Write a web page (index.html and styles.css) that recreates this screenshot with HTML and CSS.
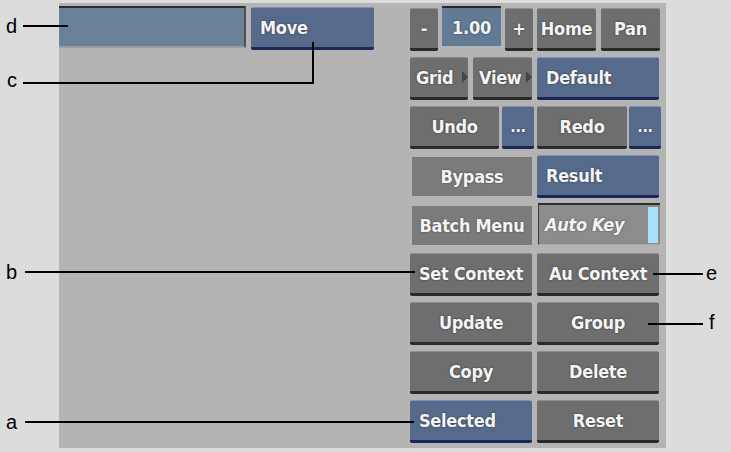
FILE: index.html
```html
<!DOCTYPE html>
<html>
<head>
<meta charset="utf-8">
<link rel="stylesheet" href="styles.css">
</head>
<body>
<div class="stage">
  <div class="panel">
    <div class="left">
      <div class="toprow">
        <div class="field-d"></div>
        <div class="btn blue w-move left-text">Move</div>
      </div>
    </div>
    <div class="right">
      <div class="row row-zoom">
        <div class="btn w-small">-</div>
        <div class="num">1.00</div>
        <div class="btn w-small">+</div>
        <div class="btn w-half">Home</div>
        <div class="btn w-pan">Pan</div>
      </div>
      <div class="row">
        <div class="btn w-grid arrow left-text">Grid</div>
        <div class="btn w-half arrow left-text">View</div>
        <div class="btn blue w-col left-text">Default</div>
      </div>
      <div class="row row-undo">
        <div class="btn w-undo">Undo</div>
        <div class="btn blue w-dots">...</div>
        <div class="btn w-redo">Redo</div>
        <div class="btn blue w-dots">...</div>
      </div>
      <div class="row">
        <div class="flat">Bypass</div>
        <div class="btn blue w-col left-text">Result</div>
      </div>
      <div class="row">
        <div class="flat">Batch Menu</div>
        <div class="autokey"><span class="ak-text">Auto Key</span><span class="ak-bar"></span></div>
      </div>
      <div class="row">
        <div class="btn w-col">Set Context</div>
        <div class="btn w-col">Au Context</div>
      </div>
      <div class="row">
        <div class="btn w-col">Update</div>
        <div class="btn w-col">Group</div>
      </div>
      <div class="row">
        <div class="btn w-col">Copy</div>
        <div class="btn w-col">Delete</div>
      </div>
      <div class="row">
        <div class="btn blue w-col left-text">Selected</div>
        <div class="btn w-col">Reset</div>
      </div>
    </div>
  </div>

  <div class="label lab-d">d</div>
  <div class="hline line-d"></div>
  <div class="label lab-c">c</div>
  <div class="hline line-c"></div>
  <div class="vline line-cv"></div>
  <div class="label lab-b">b</div>
  <div class="hline line-b"></div>
  <div class="label lab-a">a</div>
  <div class="hline line-a"></div>
  <div class="label lab-e">e</div>
  <div class="hline line-e"></div>
  <div class="label lab-f">f</div>
  <div class="hline line-f"></div>
</div>
</body>
</html>
```

FILE: styles.css
```css
html, body {
  margin: 0;
  padding: 0;
  background: #dcdcdc;
}
.stage {
  position: relative;
  width: 731px;
  height: 452px;
  padding-top: 3px;
  box-sizing: border-box;
}
.panel {
  margin-left: 59px;
  width: 607px;
  height: 445px;
  background: #b4b4b4;
  display: flex;
  font-family: "DejaVu Sans Condensed", "DejaVu Sans", sans-serif;
  font-weight: bold;
  font-size: 18px;
  letter-spacing: -0.3px;
  color: #f4f4f4;
}
.left {
  width: 351px;
  padding-top: 3px;
}
.toprow {
  display: flex;
  gap: 5px;
  align-items: flex-start;
}
.field-d {
  width: 185px;
  height: 38px;
  background: #6a8299;
  border-top: 2px solid #2c2c2c;
  border-right: 2px solid #505050;
  border-bottom: 2px solid #9c9c9c;
}
.w-move { width: 123px; margin-top: 1px; }
.right {
  padding-top: 5px;
  display: flex;
  flex-direction: column;
  gap: 5px;
}
.row {
  display: flex;
  gap: 5px;
  height: 44px;
}
.row-zoom { gap: 4px; }
.row-undo { gap: 3px; }
.btn {
  box-sizing: border-box;
  height: 43px;
  background: #6e6e6e;
  border-top: 1px solid #8c8c8c;
  border-bottom: 3px solid #2a2a2a;
  border-radius: 2px;
  display: flex;
  align-items: center;
  justify-content: center;
  text-shadow: 0 0 2px rgba(0,0,0,0.6);
  white-space: nowrap;
  position: relative;
}
.btn.blue {
  background: #566b8b;
  border-top: 1px solid #7b93b5;
  border-bottom: 3px solid #1d2656;
}
.left-text {
  justify-content: flex-start;
  padding-left: 9px;
}
.w-small { width: 28px; }
.w-half { width: 59px; }
.w-pan { width: 59px; margin-left: 1px; }
.w-grid { width: 58px; }
.w-col { width: 122px; }
.w-undo { width: 89px; }
.w-redo { width: 90px; margin-right: -1px; }
.w-dots { width: 32px; font-size: 16px; }
.w-grid.left-text, .w-half.left-text { padding-left: 6px; }
.arrow::after {
  content: "";
  position: absolute;
  right: 0;
  top: 13px;
  border-left: 6px solid #454545;
  border-top: 6px solid transparent;
  border-bottom: 6px solid transparent;
}
.num {
  box-sizing: border-box;
  width: 59px;
  height: 40px;
  background: #617a96;
  border-top: 2px solid #2a2a2a;
  display: flex;
  align-items: center;
  justify-content: center;
  text-shadow: 0 0 2px rgba(0,0,0,0.5);
  margin-top: -2px;
}
.flat {
  box-sizing: border-box;
  height: 39px;
  margin: 2px 0 0 2px;
  width: 120px;
  background: #7b7b7b;
  display: flex;
  align-items: center;
  justify-content: center;
  text-shadow: 0 0 2px rgba(0,0,0,0.5);
}
.autokey {
  box-sizing: border-box;
  height: 42px;
  margin-top: -1px;
  margin-left: 1px;
  width: 122px;
  background: #8c8c8c;
  border-top: 2px solid #2e2e2e;
  border-left: 1px solid #3a3a3a;
  border-bottom: 1px solid #a8a8a8;
  display: flex;
  align-items: center;
  justify-content: space-between;
  padding-left: 6px;
  font-style: italic;
  text-shadow: 0 0 2px rgba(0,0,0,0.5);
}
.ak-bar {
  width: 10px;
  align-self: stretch;
  margin: 2px 2px 1px 0;
  background: #a4e3fb;
}
.label {
  position: absolute;
  font-family: "Liberation Sans", Arial, sans-serif;
  font-size: 20px;
  color: #000;
  line-height: 1;
}
.hline {
  position: absolute;
  height: 2px;
  background: #000;
}
.vline {
  position: absolute;
  width: 2px;
  background: #000;
}
.lab-d { left: 6px; top: 16px; }
.line-d { left: 23px; width: 45px; top: 25px; }
.lab-c { left: 7px; top: 70px; }
.line-c { left: 23px; width: 291px; top: 82px; }
.line-cv { left: 312px; top: 42px; height: 42px; }
.lab-b { left: 6px; top: 262px; }
.line-b { left: 25px; width: 390px; top: 271px; }
.lab-a { left: 6px; top: 412px; }
.line-a { left: 25px; width: 389px; top: 421px; }
.lab-e { left: 706px; top: 263px; }
.line-e { left: 653px; width: 50px; top: 273px; }
.lab-f { left: 709px; top: 312px; }
.line-f { left: 648px; width: 55px; top: 323px; }
```
